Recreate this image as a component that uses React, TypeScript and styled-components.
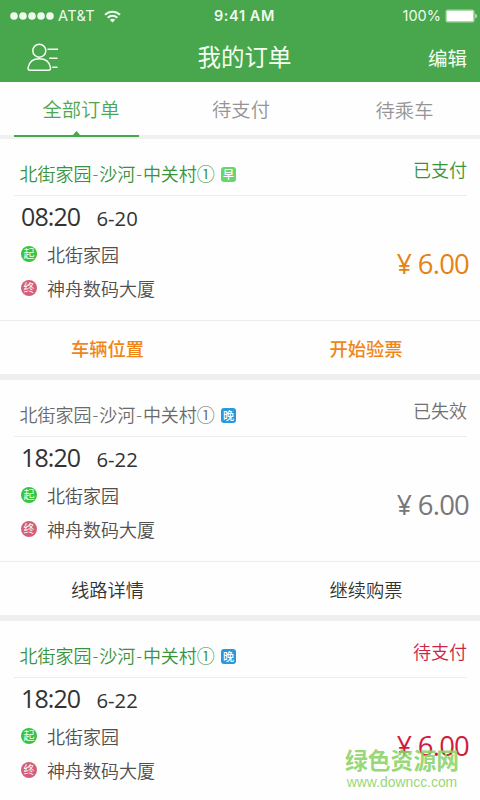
import React from 'react';
import styled, { createGlobalStyle } from 'styled-components';

const GlobalStyle = createGlobalStyle`
  * { box-sizing: border-box; }
  body { margin: 0; background: #fefefe; }
`;

const GREEN = '#48a64c';
const latin = "'Open Sans', 'Noto Sans CJK SC', sans-serif";

const Screen = styled.div`
  position: relative;
  width: 480px;
  height: 800px;
  overflow: hidden;
  background: #fefefe;
  font-family: ${latin};
  font-size: 18px;
  white-space: nowrap;
`;

const StatusBar = styled.div`
  display: grid;
  grid-template-columns: 1fr auto 1fr;
  align-items: center;
  height: 32px;
  padding: 0 3px 0 10px;
  background: ${GREEN};
  color: #effbef;
  font: 14.5px/32px Inter, sans-serif;
`;

const Carrier = styled.div`
  display: flex;
  align-items: center;
  letter-spacing: 0.4px;
`;

const Dots = styled.svg`
  width: 45px;
  height: 8px;
  margin-right: 3px;
`;

const Wifi = styled.svg`
  width: 17px;
  height: 13px;
  margin-left: 9px;
`;

const Clock = styled.div`
  margin-left: 2px;
  font-weight: 600;
  font-size: 14.5px;
  letter-spacing: 0.6px;
`;

const Power = styled.div`
  display: flex;
  justify-content: flex-end;
  align-items: center;
  gap: 4px;
`;

const Battery = styled.svg`
  width: 32px;
  height: 14px;
`;

const NavBar = styled.header`
  display: grid;
  grid-template-columns: 1fr auto 1fr;
  align-items: center;
  height: 50px;
  padding: 0 13px 0 27px;
  background: ${GREEN};
  color: #f3fff1;
`;

const Profile = styled.svg`
  width: 32px;
  height: 29px;
`;

const NavTitle = styled.h1`
  margin: 0 0 0 -5px;
  font-size: 23.5px;
  font-weight: 400;
  line-height: 34px;
`;

const Edit = styled.span`
  justify-self: end;
  margin-top: 4px;
  font-size: 19.5px;
  line-height: 30px;
`;

const Tabs = styled.nav`
  display: flex;
  justify-content: space-between;
  height: 57px;
  padding: 0 14px 0 14px;
  border-bottom: 4px solid #f1f1f1;
`;

const Tab = styled.div<{ $active?: boolean; $drop?: number }>`
  position: relative;
  width: 125px;
  height: 55px;
  padding: ${p => 14 + (p.$drop ?? 0)}px 0 0 ${p => (p.$active ? 9 : 2)}px;
  border-bottom: ${p => (p.$active ? `2px solid ${GREEN}` : '0')};
  color: ${p => (p.$active ? '#4ca750' : '#959595')};
  font-size: 19.3px;
  font-weight: 350;
  line-height: 28px;
  text-align: center;
`;

const Notch = styled.svg`
  position: absolute;
  left: 59px;
  bottom: 0;
  width: 7px;
  height: 4px;
`;

const Card = styled.article`
  height: 241px;
  border-bottom: 6px solid #efefef;
`;

const CardHead = styled.div`
  display: flex;
  justify-content: space-between;
  height: 57px;
  margin: 0 13px 0 14px;
  padding-left: 5.5px;
  border-bottom: 1px solid #ededed;
`;

const Route = styled.div<{ $color: string }>`
  display: flex;
  align-items: center;
  height: 26px;
  margin-top: 22px;
  color: ${p => p.$color};
  font-weight: 350;
  line-height: 26px;
`;

const Dash = styled.span`
  display: inline-block;
  width: 7.7px;
  text-align: center;
`;

const Shift = styled.span<{ $color: string }>`
  width: 15px;
  height: 15px;
  margin: 1px 0 0 6px;
  border-radius: 3px;
  background: ${p => p.$color};
  color: #fff;
  font-size: 11px;
  font-weight: 500;
  line-height: 15px;
  text-align: center;
`;

const Status = styled.div<{ $color: string }>`
  height: 26px;
  margin-top: 18px;
  color: ${p => p.$color};
  font-weight: 350;
  line-height: 26px;
`;

const CardBody = styled.div`
  display: flex;
  justify-content: space-between;
  height: 124px;
  padding: 4px 11px 0 21px;
`;

const Departure = styled.div`
  display: flex;
  align-items: baseline;
  height: 38.5px;
  color: #333;
  line-height: 32px;
`;

const Time = styled.span`
  width: 75.5px;
  font-size: 25px;
  letter-spacing: -0.9px;
`;

const Day = styled.span`
  font-size: 20.3px;
  letter-spacing: 0;
`;

const Stop = styled.div`
  display: flex;
  align-items: center;
  height: 33.5px;
  color: #505050;
  font-weight: 350;
  line-height: 26px;
`;

const StopMark = styled.span<{ $color: string }>`
  width: 16px;
  height: 16px;
  margin: 0 10px 2px 0;
  border-radius: 50%;
  background: ${p => p.$color};
  color: #f2fff2;
  font-size: 11px;
  font-weight: 400;
  line-height: 16px;
  text-align: center;
`;

const Price = styled.div<{ $color: string }>`
  display: flex;
  align-items: center;
  height: 40px;
  margin-top: 44px;
  color: ${p => p.$color};
  font-size: 27.5px;
  line-height: 40px;
  letter-spacing: -0.8px;
`;

const Yen = styled.span`
  width: 21px;
  font-size: 26.5px;
`;

const Actions = styled.div`
  display: grid;
  grid-template-columns: 1fr 1fr;
  height: 54px;
  padding: 0 6px 0 0;
  border-top: 1px solid #ebebeb;
`;

const Action = styled.span<{ $color: string; $weight: number }>`
  padding-top: 14.5px;
  color: ${p => p.$color};
  font-weight: ${p => p.$weight};
  font-size: 18.3px;
  line-height: 26px;
  text-align: center;

  &:first-child { padding-right: 22px; }
  &:last-child { padding-left: 21px; }
`;

const Watermark = styled.div`
  position: absolute;
  left: 344px;
  top: 746px;
  width: 116px;
  color: rgba(139, 211, 101, 0.9);
  text-align: center;
`;

const SiteName = styled.div`
  font-size: 22.8px;
  font-weight: 700;
  line-height: 30px;
`;

const SiteUrl = styled.div`
  margin-top: -3px;
  font: 13.9px/18px 'Liberation Sans', sans-serif;
`;

interface Order {
  color: string;
  shift: string;
  shiftColor: string;
  status: string;
  statusColor: string;
  time: string;
  day: string;
  priceColor: string;
  actions: string[];
  actionColor: string;
  actionWeight: number;
}

const orders: Order[] = [
  {
    color: '#38943b', shift: '早', shiftColor: '#65d76e', status: '已支付', statusColor: '#38943b',
    time: '08:20', day: '6-20', priceColor: '#e58213', actions: ['车辆位置', '开始验票'],
    actionColor: '#f08619', actionWeight: 500,
  },
  {
    color: '#6b6b6b', shift: '晚', shiftColor: '#2998dc', status: '已失效', statusColor: '#707070',
    time: '18:20', day: '6-22', priceColor: '#777', actions: ['线路详情', '继续购票'],
    actionColor: '#333', actionWeight: 350,
  },
  {
    color: '#38943b', shift: '晚', shiftColor: '#2998dc', status: '待支付', statusColor: '#cd2349',
    time: '18:20', day: '6-22', priceColor: '#cf1c3c', actions: [],
    actionColor: '#333', actionWeight: 350,
  },
];

function OrderCard({ order }: { order: Order }) {
  return (
    <Card>
      <CardHead>
        <Route $color={order.color}>
          北街家园<Dash>-</Dash>沙河<Dash>-</Dash>中关村①
          <Shift $color={order.shiftColor}>{order.shift}</Shift>
        </Route>
        <Status $color={order.statusColor}>{order.status}</Status>
      </CardHead>
      <CardBody>
        <div>
          <Departure>
            <Time>{order.time}</Time>
            <Day>{order.day}</Day>
          </Departure>
          <Stop><StopMark $color="#35c63e">起</StopMark>北街家园</Stop>
          <Stop><StopMark $color="#d65c7c">终</StopMark>神舟数码大厦</Stop>
        </div>
        <Price $color={order.priceColor}><Yen>¥</Yen>6.00</Price>
      </CardBody>
      <Actions>
        {order.actions.map(label => (
          <Action key={label} $color={order.actionColor} $weight={order.actionWeight}>{label}</Action>
        ))}
      </Actions>
    </Card>
  );
}

export default function App() {
  return (
    <Screen>
      <GlobalStyle />
      <StatusBar>
        <Carrier>
          <Dots viewBox="0 0 45 8" fill="currentColor">
            {[4, 13, 22, 31, 40].map(x => <circle key={x} cx={x} cy="4" r="3.8" />)}
          </Dots>
          AT&amp;T
          <Wifi viewBox="0 0 17 13" fill="none" stroke="currentColor" strokeWidth="2">
            <path d="M1 4.8C5.2.6 11.800.6 16 4.800M3.700 7.700c2.700-2.700 6.900-2.700 9.600 0" />
            <path d="M5.800 9.700c1.500-1.400 3.900-1.400 5.400 0L8.500 12.500z" fill="currentColor" stroke="none" />
          </Wifi>
        </Carrier>
        <Clock>9:41 AM</Clock>
        <Power>
          100%
          <Battery viewBox="0 0 32 14">
            <rect x=".5" y=".5" width="29" height="13" rx="2.500" fill="#a9dca9" />
            <rect x="2" y="2" width="26" height="10" rx="1" fill="#fff" />
            <path d="M30.300 4.500c2 .8 2 4.200 0 5z" fill="#d6f0d6" />
          </Battery>
        </Power>
      </StatusBar>
      <NavBar>
        <Profile viewBox="0 0 32 29" fill="none" stroke="currentColor" strokeWidth="1.500">
          <circle cx="12.300" cy="7.700" r="6.500" />
          <path d="M3 27.200c-1.500 0-2.200-1-1.900-2.600C2.200 19 6.500 15.800 12.300 15.800s10.200 3.200 11.200 8.800c.3 1.600-.4 2.600-1.900 2.600zM20.500 6.200H31M22.300 15.200H30.500M25.300 24.200H30.500" />
        </Profile>
        <NavTitle>我的订单</NavTitle>
        <Edit>编辑</Edit>
      </NavBar>
      <Tabs>
        <Tab $active>
          全部订单
          <Notch viewBox="0 0 7 4"><path d="M0 4 3.500 0 7 4z" fill={GREEN} /></Notch>
        </Tab>
        <Tab>待支付</Tab>
        <Tab $drop={1}>待乘车</Tab>
      </Tabs>
      {orders.map((order, i) => <OrderCard key={i} order={order} />)}
      <Watermark>
        <SiteName>绿色资源网</SiteName>
        <SiteUrl>www.downcc.com</SiteUrl>
      </Watermark>
    </Screen>
  );
}
